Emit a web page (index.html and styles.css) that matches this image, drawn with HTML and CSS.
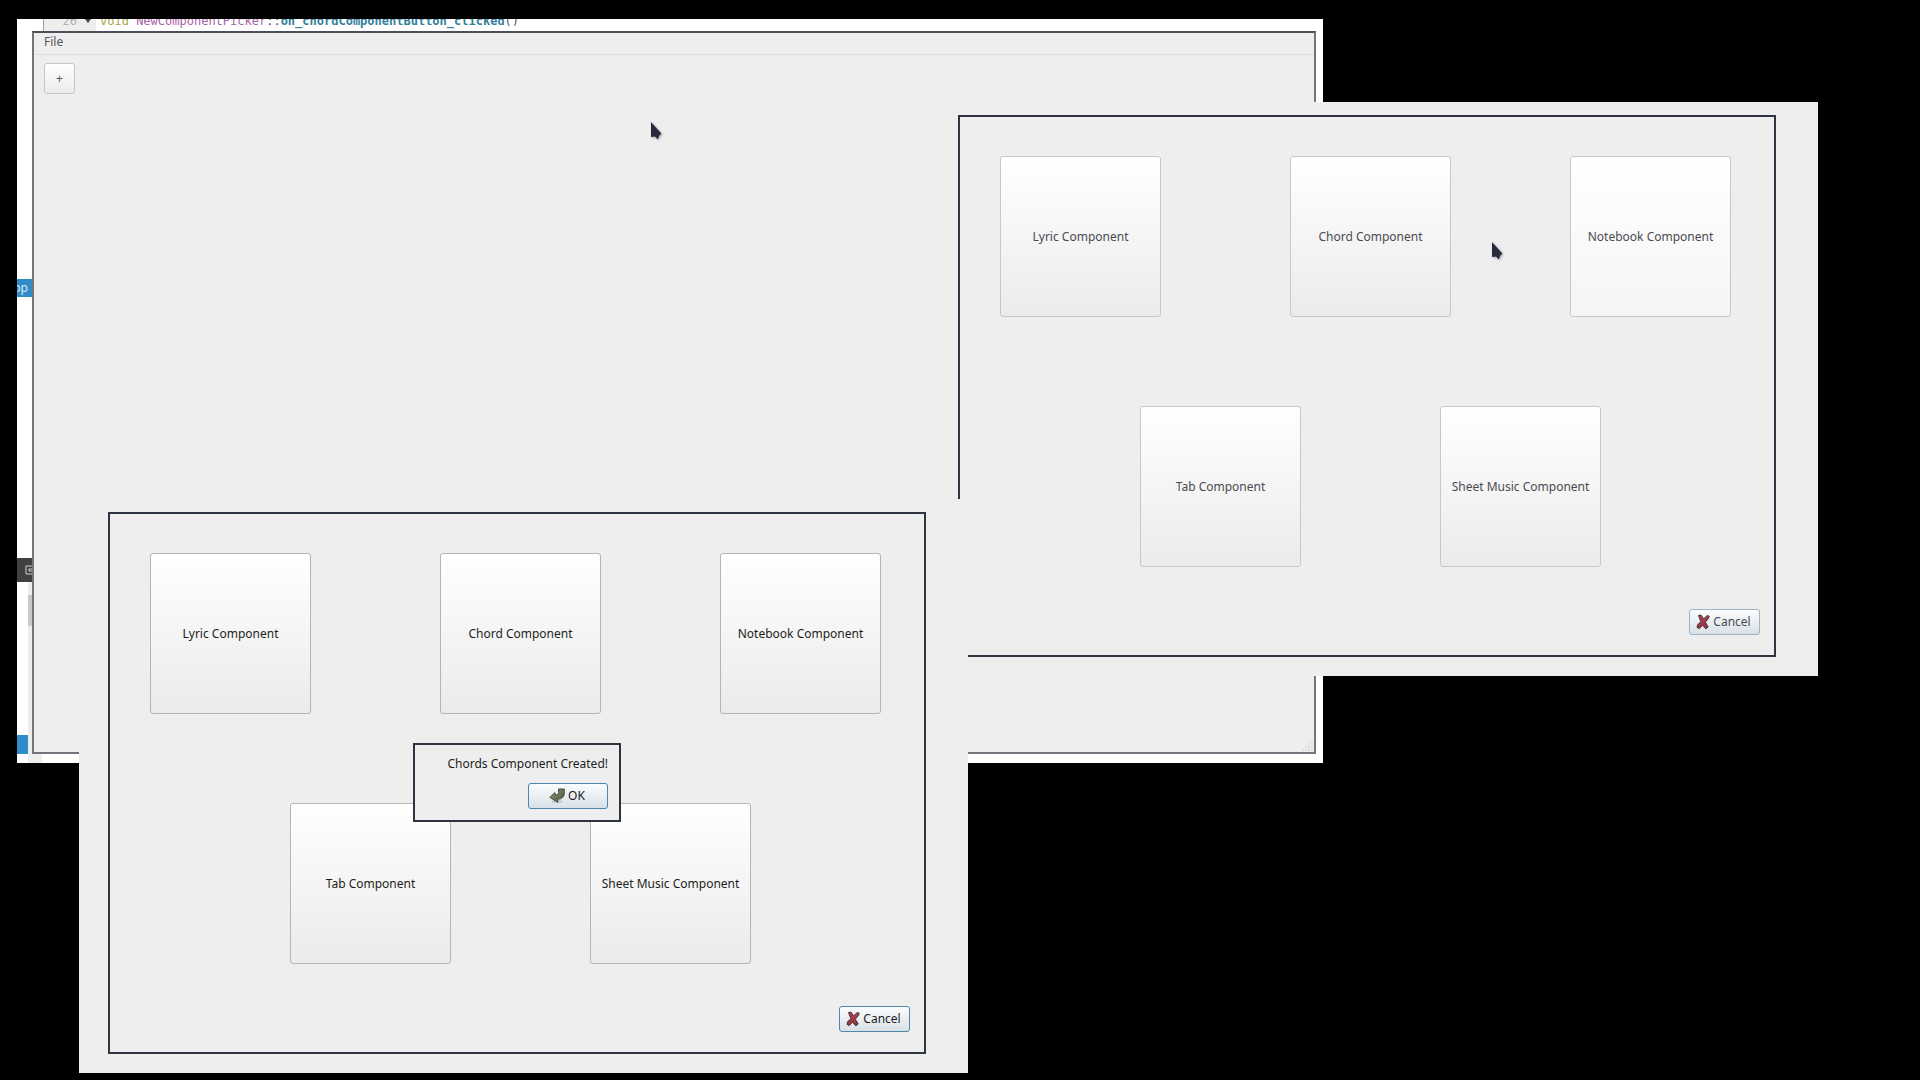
FILE: index.html
```html
<!DOCTYPE html>
<html lang="en">
<head>
<meta charset="utf-8">
<title>New Component Picker</title>
<link rel="stylesheet" href="styles.css">
</head>
<body>
<svg width="0" height="0" class="defs" aria-hidden="true">
  <defs>
    <linearGradient id="red" x1="0" y1="0" x2="0" y2="1"><stop offset="0" stop-color="#b8434c"/><stop offset="1" stop-color="#8e3440"/></linearGradient>
    <linearGradient id="green" x1="0" y1="0" x2="1" y2="1"><stop offset="0" stop-color="#87937a"/><stop offset="1" stop-color="#4c5a3c"/></linearGradient>
    <symbol id="cross" viewBox="0 0 14 16">
      <path d="M2.5 1.5 5 1l2.6 4L11 1.6l2.2.6-.6 2-3.2 4 2.8 4.8-2.4 1.8-3.2-3.6-3.4 3.4-2.2-1.2.6-2.6 3.2-3.2z" fill="url(#red)" stroke="#43343a" stroke-width="1" stroke-linejoin="round"/>
    </symbol>
    <symbol id="enter" viewBox="0 0 16 16">
      <ellipse cx="8" cy="13.6" rx="5.5" ry="1.6" fill="#000" opacity=".14"/>
      <path d="M9.5 1h5.8v4.6c0 3.2-2.6 5.6-6.6 5.6v3L.8 9.4 5.8 4.6l.6 2.2c2.1 0 3.1-.8 3.1-2.4z" fill="url(#green)" stroke="#46503f" stroke-width="1" stroke-linejoin="round"/>
    </symbol>
    <symbol id="pointer" viewBox="0 0 12 20">
      <path d="M1 1v15l4-.4 2.8 3 1.2-3.6 2.4-2.6z" fill="#272b3b"/>
    </symbol>
  </defs>
</svg>

<main class="desktop">
  <section class="editor">
    <div class="code">
      <span class="gutter"><span>26</span><span class="fold"></span></span>
      <code><span class="kw">void</span> <span class="cls">NewComponentPicker</span>::<span class="fn">on_chordComponentButton_clicked</span>()</code>
    </div>
    <div class="middle">
      <div class="sliver">
        <span class="selected">pp</span>
        <span class="dark"><svg width="10" height="10" viewBox="0 0 10 10"><path d="M9 1H1v8h8M9 4H4v2h5" fill="none" stroke="#d0d0d0"/></svg></span>
        <div class="list"><span class="row"></span><span class="track"><span class="thumb"></span></span></div>
      </div>
      <div class="app">
        <nav class="menubar"><button class="menu" type="button">File</button></nav>
        <button class="push add" type="button" aria-label="Add component">+</button>
        <svg class="grip" width="12" height="12" viewBox="0 0 12 12"><path d="M1 11h11M4 8h8M7 5h5M10 2h2" stroke="#dedede" stroke-width="2" stroke-dasharray="2 1"/></svg>
      </div>
    </div>
    <div class="foot"></div>
    <svg class="pointer" width="12" height="20"><use href="#pointer"/></svg>
  </section>

  <section class="shot shot-hover">
    <div class="frame">
      <div class="three">
        <button class="push tile" type="button">Lyric Component</button>
        <button class="push tile" type="button">Chord Component</button>
        <button class="push tile lit" type="button">Notebook Component</button>
      </div>
      <div class="two">
        <button class="push tile" type="button">Tab Component</button>
        <button class="push tile" type="button">Sheet Music Component</button>
      </div>
      <div class="actions"><button class="push action" type="button"><svg width="14" height="16"><use href="#cross"/></svg>Cancel</button></div>
    </div>
    <svg class="pointer" width="12" height="20"><use href="#pointer"/></svg>
  </section>

  <section class="shot shot-created">
    <div class="frame">
      <div class="three">
        <button class="push tile" type="button">Lyric Component</button>
        <button class="push tile" type="button">Chord Component</button>
        <button class="push tile" type="button">Notebook Component</button>
      </div>
      <div class="two">
        <button class="push tile" type="button">Tab Component</button>
        <button class="push tile" type="button">Sheet Music Component</button>
      </div>
      <div class="actions"><button class="push action" type="button"><svg width="14" height="16"><use href="#cross"/></svg>Cancel</button></div>
    </div>
    <div class="message" role="dialog" aria-labelledby="msg">
      <p id="msg">Chords Component Created!</p>
      <button class="push action ok" type="button"><svg width="16" height="16"><use href="#enter"/></svg>OK</button>
    </div>
  </section>
</main>
</body>
</html>
```
FILE: styles.css
```css
* { box-sizing: border-box; }

body {
  margin: 0;
  background: #000;
  color: #1c1d20;
  font: 12px/18px "Noto Sans", sans-serif;
}

.defs { position: absolute; }

.desktop {
  position: relative;
  min-height: 100vh;
  overflow: hidden;
}

/* Buttons */
.push {
  display: flex;
  align-items: center;
  justify-content: center;
  padding: 0;
  border: 1px solid #b4b4b4;
  border-radius: 3px;
  background: linear-gradient(#fff, #ebebeb);
  color: inherit;
  font: inherit;
  white-space: nowrap;
}

.tile { width: 161px; height: 161px; }
.lit { background: linear-gradient(#fff, #f5f5f5); }

.action {
  width: 71px;
  height: 26px;
  gap: 3px;
  padding-right: 2px;
  border-color: #4f86ae;
  background: linear-gradient(#fbfcfd, #d9e1e8);
}

/* Editor with the main window on top */
.editor {
  position: absolute;
  top: 19px;
  left: 17px;
  right: 597px;
  bottom: 317px;
  display: flex;
  flex-direction: column;
  background: #fff;
  color: #55565a;
}

.code {
  display: flex;
  align-items: flex-end;
  height: 12px;
  padding-left: 26px;
  overflow: hidden;
  font: 12px/16px "DejaVu Sans Mono", monospace;
}

.code code { height: 18px; padding-left: 4px; font: inherit; white-space: pre; }

.gutter {
  display: flex;
  justify-content: flex-end;
  gap: 8px;
  width: 53px;
  height: 18px;
  padding-right: 5px;
  border-left: 1px solid #a0a0a0;
  background: #eee;
  color: #b0b0b0;
}

.fold {
  align-self: center;
  border: 3px solid transparent;
  border-top: 4px solid #444;
}

.kw { color: #a5a548; }
.cls { color: #a862a8; }
.fn { color: #33809a; font-weight: bold; }

.middle {
  display: flex;
  flex: 1;
  min-height: 0;
  padding-right: 7px;
}

.sliver {
  display: flex;
  flex-direction: column;
  width: 15px;
  padding-top: 248px;
  overflow: hidden;
}

.selected {
  display: flex;
  justify-content: flex-end;
  height: 18px;
  padding-right: 4px;
  background: #308cc6;
  color: #d8eaf6;
}

.dark {
  display: flex;
  align-items: center;
  height: 24px;
  margin-top: 261px;
  padding-left: 8px;
  background: #404142;
}

.dark svg { flex: none; }

.list { display: flex; flex: 1; }
.row { flex: 1; align-self: flex-end; height: 19px; background: #308cc6; }
.track { width: 4px; padding-top: 13px; background: #ececec; }
.thumb { display: block; height: 31px; background: #c8c8c8; }

.app {
  position: relative;
  flex: 1;
  border: 2px solid #73757c;
  border-top-color: #4c505a;
  background: #eee;
}

.menubar { height: 22px; padding-left: 10px; border-bottom: 1px solid #dedede; }
.menu { padding: 0; border: 0; background: none; color: inherit; font: inherit; }
.add { width: 31px; height: 31px; margin: 8px 10px; border-color: #c6c6c6; }
.grip { position: absolute; right: 1px; bottom: 1px; }
.foot { height: 9px; margin-left: 11px; border-left: 14px solid #eee; }

/* Picker dialogs */
.shot { position: absolute; padding: 13px 42px 19px 29px; background: #eee; }

.shot-hover { top: 102px; left: 929px; right: 102px; color: #4a4b50; }
.shot-hover .push { border-color: #c8c8c8; }
.shot-hover .action { border-color: #9db4c8; }
.shot-created { top: 499px; left: 79px; right: 952px; }

.frame { padding: 39px 14px 20px 40px; border: 2px solid #2f3441; }

.three {
  display: grid;
  grid-template-columns: 290fr 280fr 161px;
  padding-right: 29px;
}

.two { display: flex; gap: 139px; margin-top: 89px; padding-left: 140px; }
.actions { display: flex; justify-content: flex-end; margin-top: 42px; }

.message {
  position: absolute;
  top: 244px;
  left: 334px;
  display: flex;
  flex-direction: column;
  align-items: flex-end;
  gap: 10px;
  width: 208px;
  padding: 10px 11px 11px;
  border: 2px solid #2f3441;
  background: #eee;
}

.message p { margin: 0; }
.ok { width: 80px; }

.pointer { position: absolute; filter: drop-shadow(1px 1px 1px #a0a0b4); }
.editor .pointer { top: 102px; left: 633px; }
.shot-hover .pointer { top: 139px; left: 562px; }
```
